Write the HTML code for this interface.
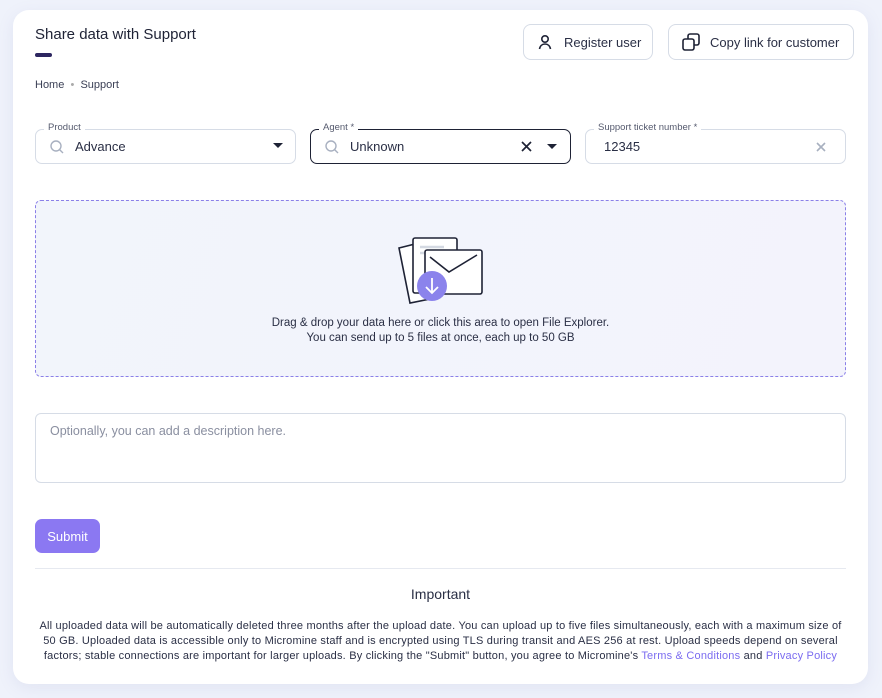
<!DOCTYPE html>
<html><head><meta charset="utf-8"><style>
*{box-sizing:border-box;margin:0;padding:0}
body{width:882px;height:698px;background:#eff2fb;font-family:"Liberation Sans",sans-serif;color:#1e2235;position:relative;overflow:hidden}
.card{position:absolute;left:13px;top:10px;width:855px;height:674px;background:#fff;border-radius:16px;box-shadow:0 4px 16px rgba(120,130,180,.12)}
.abs{position:absolute}
h1{position:absolute;left:22px;top:16px;font-size:15px;font-weight:normal;color:#1e2235}
.bar{left:22px;top:43px;width:17px;height:4px;border-radius:2px;background:#2d2660}
.crumb{left:22px;top:69px;font-size:11px;color:#3a3f55}
.btn{position:absolute;top:14px;height:36px;border:1px solid #d6dce6;border-radius:8px;font-size:13px;color:#2a2f45;display:flex;align-items:center;padding-left:12px}
.field{position:absolute;top:119px;height:35px;border:1px solid #d6dce6;border-radius:7px;font-size:13px;display:flex;align-items:center}
.lab{position:absolute;top:-8px;left:8px;background:#fff;padding:0 4px;font-size:9.5px;color:#555a6e}
.drop{left:22px;top:190px;width:811px;height:177px;border:1px dashed #8b80e8;border-radius:6px;background:linear-gradient(110deg,#f2f5fb,#f3f3fc);text-align:center}
.desc{left:22px;top:403px;width:811px;height:70px;border:1px solid #d6dce6;border-radius:6px;font-size:12.5px;color:#8a8fa0;padding:10px 14px}
.sub{left:22px;top:509px;width:65px;height:34px;border-radius:7px;background:#8b78f2;color:#fff;font-size:13px;display:flex;align-items:center;justify-content:center}
.hr{left:22px;top:558px;width:811px;height:1px;background:#e6e9f0}
.imp{left:0;width:855px;top:576px;text-align:center;font-size:14px;color:#2a2f45}
.foot{left:0;width:855px;top:609px;text-align:center;font-size:11px;line-height:15px;color:#2a2f45;letter-spacing:0.2px;white-space:nowrap}
.foot a{color:#7b6cf0;text-decoration:none}
</style></head><body>
<div class="card">
<h1>Share data with Support</h1>
<div class="abs bar"></div>
<div class="abs crumb">Home &nbsp;<span style="color:#aaa">•</span>&nbsp; Support</div>
<div class="btn" style="left:510px;width:130px"><svg width="18" height="18" viewBox="0 0 18 18" fill="none" stroke="#1e2235" stroke-width="1.6"><circle cx="9" cy="6" r="3.2"/><path d="M3.5 16c.5-3.2 2.8-5 5.5-5s5 1.8 5.5 5"/></svg><span style="margin-left:10px">Register user</span></div>
<div class="btn" style="left:655px;width:186px"><svg width="20" height="20" viewBox="0 0 20 20" fill="none" stroke="#1e2235" stroke-width="1.6"><rect x="7" y="2" width="11" height="11" rx="2"/><rect x="2" y="7" width="11" height="11" rx="2" fill="#fff"/></svg><span style="margin-left:9px">Copy link for customer</span></div>

<div class="field" style="left:22px;width:261px"><span class="lab">Product</span>
<svg style="margin-left:13px" width="16" height="16" viewBox="0 0 16 16" fill="none" stroke="#a8b0c0" stroke-width="1.4"><circle cx="7" cy="7" r="5"/><path d="M10.7 10.7 14 14"/></svg>
<span style="margin-left:10px;color:#2a2f45">Advance</span>
<svg class="abs" style="right:12px;top:13px" width="10" height="6"><path d="M0 0h10L5 5z" fill="#1e2235"/></svg></div>

<div class="field" style="left:297px;width:261px;border-color:#1e2235"><span class="lab">Agent *</span>
<svg style="margin-left:13px" width="16" height="16" viewBox="0 0 16 16" fill="none" stroke="#a8b0c0" stroke-width="1.4"><circle cx="7" cy="7" r="5"/><path d="M10.7 10.7 14 14"/></svg>
<span style="margin-left:10px;color:#2a2f45">Unknown</span>
<svg class="abs" style="right:38px;top:11px" width="11" height="11" stroke="#1e2235" stroke-width="1.7"><path d="M1 1l9 9M10 1l-9 9"/></svg>
<svg class="abs" style="right:13px;top:14px" width="10" height="6"><path d="M0 0h10L5 5z" fill="#1e2235"/></svg></div>

<div class="field" style="left:572px;width:261px"><span class="lab">Support ticket number *</span>
<span style="margin-left:18px;color:#2a2f45">12345</span>
<svg class="abs" style="right:19px;top:12px" width="10" height="10" stroke="#a8b0c0" stroke-width="1.6"><path d="M1 1l8 8M9 1l-8 8"/></svg></div>

<div class="abs drop">
<svg style="margin-top:35px" width="90" height="68" viewBox="0 0 90 68" fill="none" stroke="#1e2235" stroke-width="1.6">
<path d="M3 12l20-5 11 56-20 4z" fill="#fff"/>
<rect x="17" y="2" width="44" height="55" rx="2" fill="#fff"/>
<path d="M24 11h24M24 17h20" stroke="#d4d9e2" stroke-width="2.5"/>
<rect x="29" y="14" width="57" height="44" rx="2" fill="#fff"/>
<path d="M34 21l19 15 28-17"/>
<circle cx="36" cy="50" r="15" fill="#8b83ec" stroke="none"/>
<path d="M36 42v15M30 51l6 6 6-6" stroke="#fff" stroke-width="1.8"/>
</svg>
<div style="font-size:11.5px;line-height:14.5px;color:#2a2f45;margin-top:7px">Drag &amp; drop your data here or click this area to open File Explorer.<br>You can send up to 5 files at once, each up to 50 GB</div>
</div>

<div class="abs desc">Optionally, you can add a description here.</div>
<div class="abs sub">Submit</div>
<div class="abs hr"></div>
<div class="abs imp">Important</div>
<div class="abs foot">All uploaded data will be automatically deleted three months after the upload date. You can upload up to five files simultaneously, each with a maximum size of<br>50 GB. Uploaded data is accessible only to Micromine staff and is encrypted using TLS during transit and AES 256 at rest. Upload speeds depend on several<br>factors; stable connections are important for larger uploads. By clicking the "Submit" button, you agree to Micromine's <a>Terms &amp; Conditions</a> and <a>Privacy Policy</a></div>
</div>
</body></html>
